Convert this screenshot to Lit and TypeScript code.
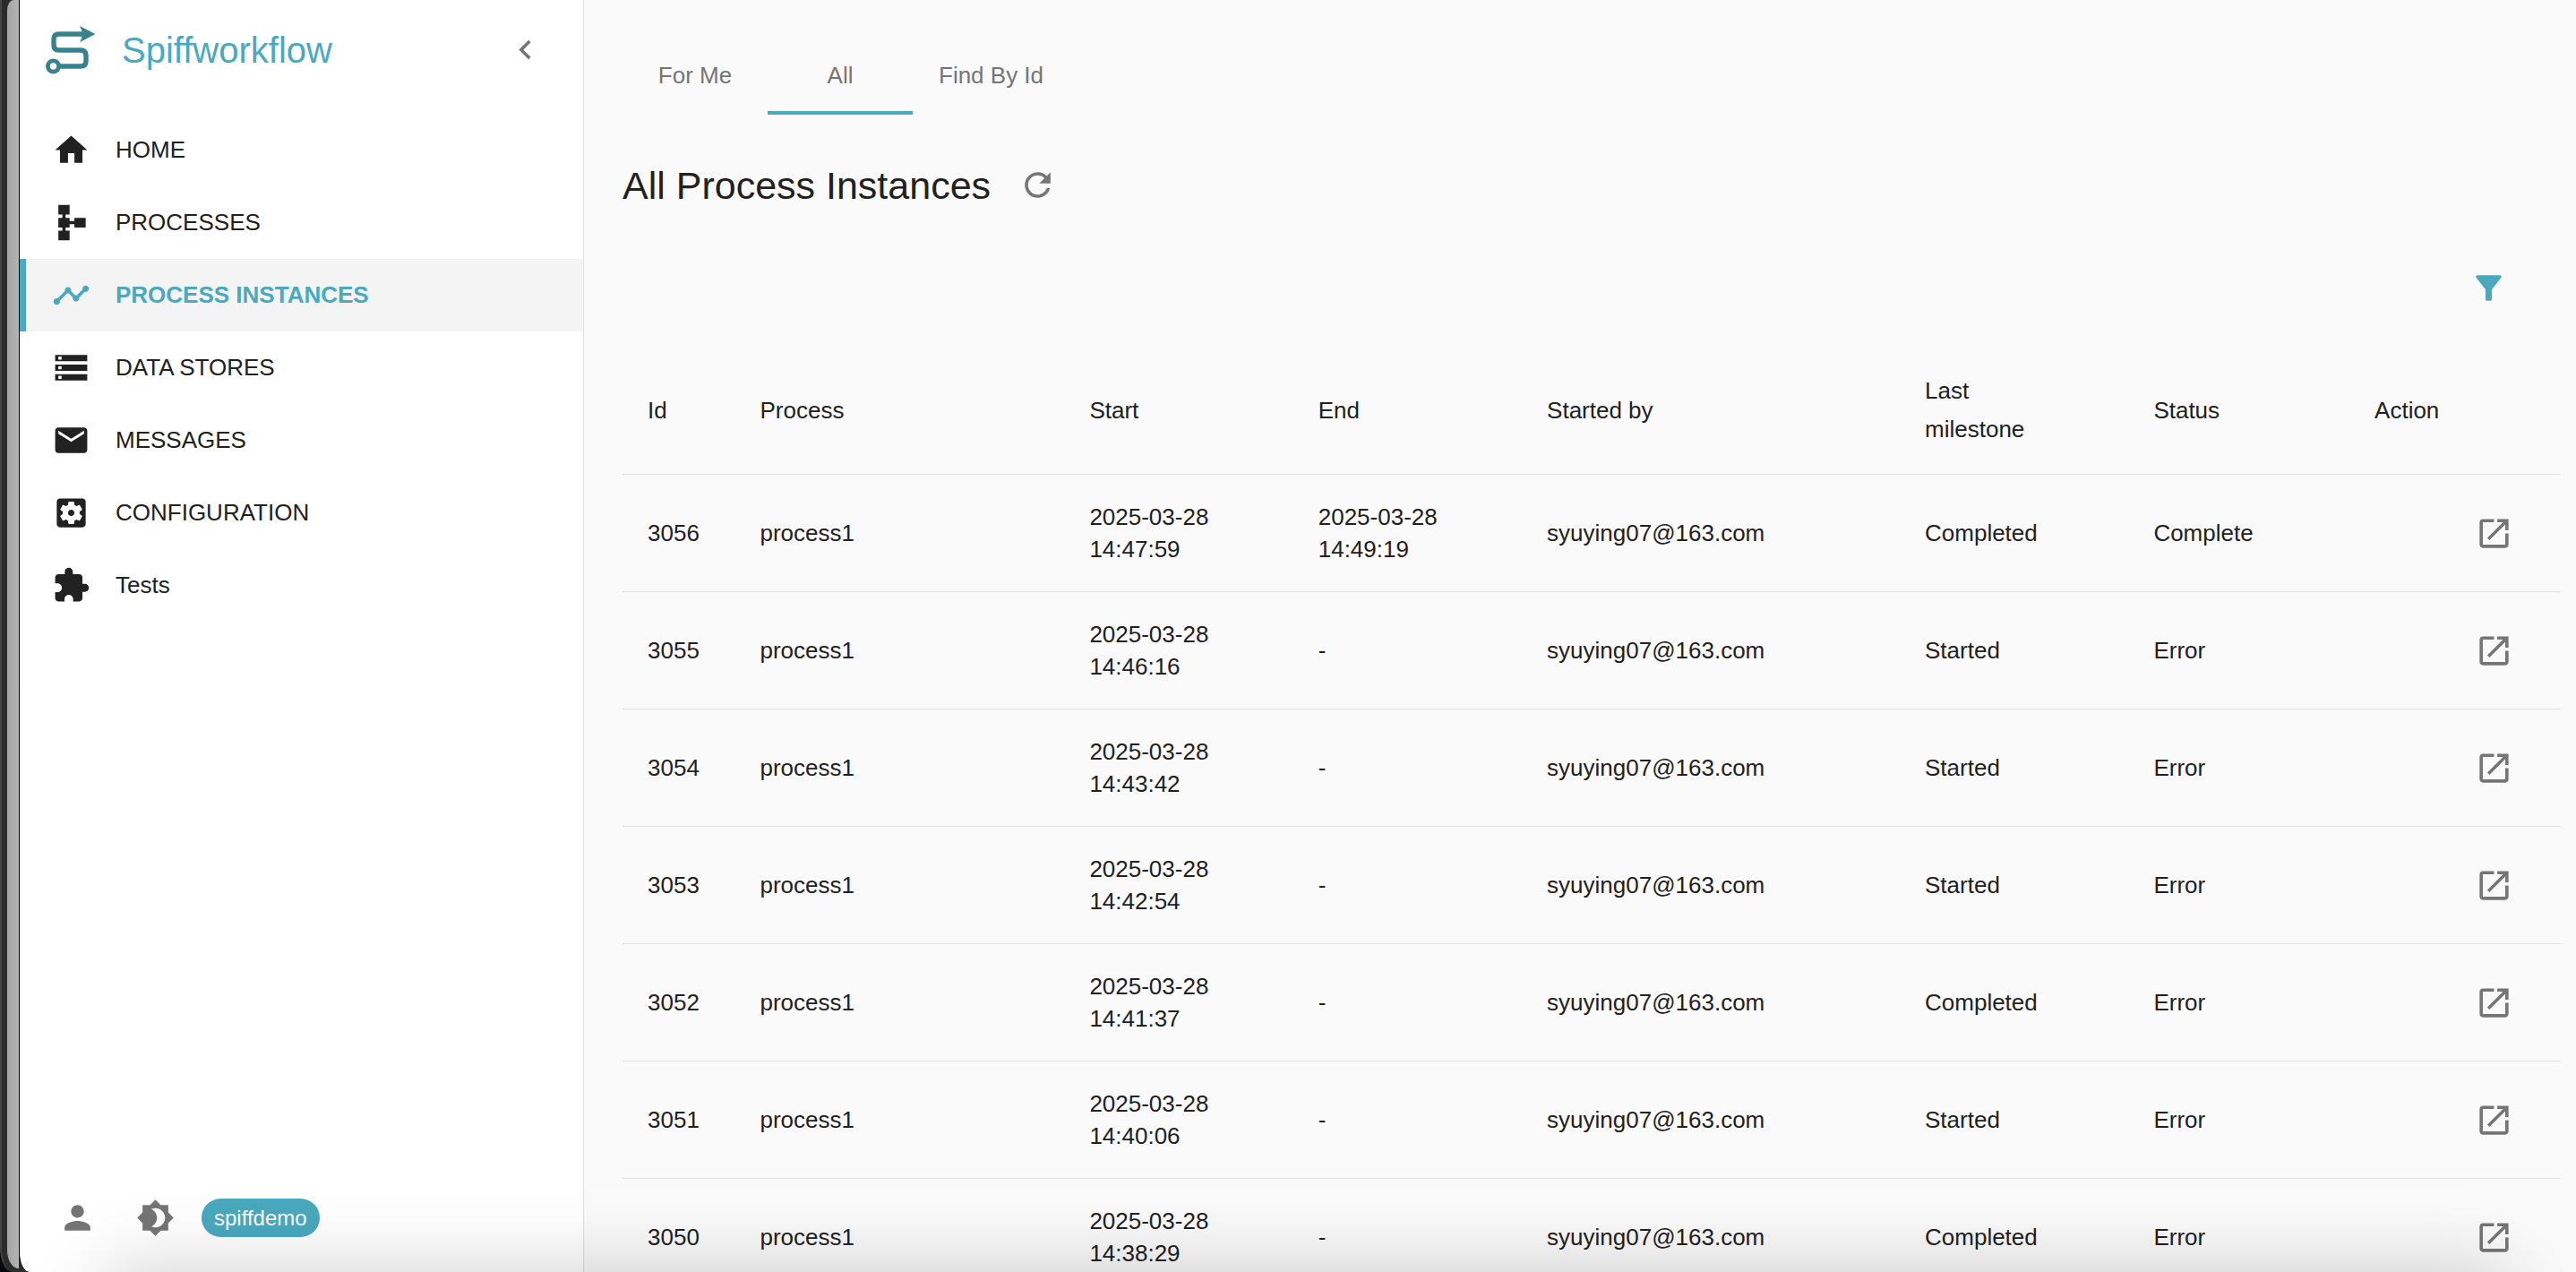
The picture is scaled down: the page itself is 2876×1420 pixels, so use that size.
import { LitElement, html, css, svg } from "lit";
import { customElement, property, state } from "lit/decorators.js";
import { classMap } from "lit/directives/class-map.js";

const ICONS: Record<string, string> = {
  home: "M10 20v-6h4v6h5v-8h3L12 3 2 12h3v8z",
  schema:
    "M14 9v2h-3V9H8.5V7H11V1H4v6h2.5v2H4v6h2.5v2H4v6h7v-6H8.5v-2H11v-2h3v2h7V9h-7z",
  timeline:
    "M23 8c0 1.1-.9 2-2 2-.18 0-.35-.02-.51-.07l-3.56 3.55c.05.16.07.34.07.52 0 1.1-.9 2-2 2s-2-.9-2-2c0-.18.02-.36.07-.52l-2.55-2.55c-.16.05-.34.07-.52.07s-.36-.02-.52-.07l-4.55 4.56c.05.16.07.33.07.51 0 1.1-.9 2-2 2s-2-.9-2-2 .9-2 2-2c.18 0 .35.02.51.07l4.56-4.55C8.02 9.36 8 9.18 8 9c0-1.1.9-2 2-2s2 .9 2 2c0 .18-.02.36-.07.52l2.55 2.55c.16-.05.34-.07.52-.07s.36.02.52.07l3.55-3.56C19.02 8.35 19 8.18 19 8c0-1.1.9-2 2-2s2 .9 2 2z",
  storage:
    "M2 20h20v-4H2v4zm2-3h2v2H4v-2zM2 4v4h20V4H2zm4 3H4V5h2v2zm-4 7h20v-4H2v4zm2-3h2v2H4v-2z",
  mail: "M20 4H4c-1.1 0-1.99.9-1.99 2L2 18c0 1.1.9 2 2 2h16c1.1 0 2-.9 2-2V6c0-1.1-.9-2-2-2zm0 4-8 5-8-5V6l8 5 8-5v2z",
  settings:
    "M12 10c-1.1 0-2 .9-2 2s.9 2 2 2 2-.9 2-2-.9-2-2-2zm7-7H5c-1.11 0-2 .9-2 2v14c0 1.1.89 2 2 2h14c1.11 0 2-.9 2-2V5c0-1.1-.89-2-2-2zm-1.75 9c0 .23-.02.46-.05.68l1.48 1.16c.13.11.17.3.08.45l-1.4 2.42c-.09.15-.27.21-.43.15l-1.74-.7c-.36.28-.76.51-1.18.69l-.26 1.85c-.03.17-.18.3-.35.3h-2.8c-.17 0-.32-.13-.35-.29l-.26-1.85c-.43-.18-.82-.41-1.18-.69l-1.74.7c-.16.06-.34 0-.43-.15l-1.4-2.42c-.09-.15-.05-.34.08-.45l1.48-1.16c-.03-.23-.05-.46-.05-.69 0-.23.02-.46.05-.68l-1.48-1.16c-.13-.11-.17-.3-.08-.45l1.4-2.42c.09-.15.27-.21.43-.15l1.74.7c.36-.28.76-.51 1.18-.69l.26-1.85c.03-.17.18-.3.35-.3h2.8c.17 0 .32.13.35.29l.26 1.85c.43.18.82.41 1.18.69l1.74-.7c.16-.06.34 0 .43.15l1.4 2.42c.09.15.05.34-.08.45l-1.48 1.16c.03.23.05.46.05.69z",
  extension:
    "M20.5 11H19V7c0-1.1-.9-2-2-2h-4V3.5C13 2.12 11.88 1 10.5 1S8 2.12 8 3.5V5H4c-1.1 0-1.99.9-1.99 2v3.8H3.5c1.49 0 2.7 1.21 2.7 2.7s-1.21 2.7-2.7 2.7H2V20c0 1.1.9 2 2 2h3.8v-1.5c0-1.49 1.21-2.7 2.7-2.7 1.49 0 2.7 1.21 2.7 2.7V22H17c1.1 0 2-.9 2-2v-4h1.5c1.38 0 2.5-1.12 2.5-2.5S21.88 11 20.5 11z",
  person:
    "M12 12c2.21 0 4-1.79 4-4s-1.79-4-4-4-4 1.79-4 4 1.79 4 4 4zm0 2c-2.67 0-8 1.34-8 4v2h16v-2c0-2.66-5.33-4-8-4z",
  brightness:
    "M20 8.69V4h-4.69L12 .69 8.69 4H4v4.69L.69 12 4 15.31V20h4.69L12 23.31 15.31 20H20v-4.69L23.31 12 20 8.69zM12 18c-.89 0-1.74-.2-2.5-.55C11.56 16.5 13 14.42 13 12s-1.44-4.5-3.5-5.45C10.26 6.2 11.11 6 12 6c3.31 0 6 2.69 6 6s-2.69 6-6 6z",
  chevron: "M15.41 7.41 14 6l-6 6 6 6 1.41-1.41L10.83 12z",
  refresh:
    "M17.65 6.35C16.2 4.9 14.21 4 12 4c-4.42 0-7.99 3.58-7.99 8s3.57 8 7.99 8c3.73 0 6.84-2.55 7.73-6h-2.08c-.82 2.33-3.04 4-5.65 4-3.31 0-6-2.69-6-6s2.69-6 6-6c1.66 0 3.14.69 4.22 1.78L13 11h7V4l-2.35 2.35z",
  filter:
    "M4.25 5.61C6.27 8.2 10 13 10 13v6c0 .55.45 1 1 1h2c.55 0 1-.45 1-1v-6s3.72-4.8 5.74-7.39c.51-.66.04-1.61-.79-1.61H5.04c-.83 0-1.3.95-.79 1.61z",
  open: "M19 19H5V5h7V3H5c-1.11 0-2 .9-2 2v14c0 1.1.89 2 2 2h14c1.1 0 2-.9 2-2v-7h-2v7zM14 3v2h3.59l-9.83 9.83 1.41 1.41L19 6.41V10h2V3h-7z",
};

@customElement("ui-icon")
class UiIcon extends LitElement {
  @property() name = "home";

  static styles = css`
    :host {
      display: block;
      flex: none;
      width: 43px;
      height: 43px;
    }
    .glyph {
      display: block;
      width: 100%;
      height: 100%;
      fill: currentColor;
    }
  `;

  render() {
    return html`<svg class="glyph" viewBox="0 0 24 24" aria-hidden="true">
      ${svg`<path d=${ICONS[this.name]}></path>`}
    </svg>`;
  }
}

const controls = css`
  .icon-button {
    display: flex;
    flex: none;
    padding: 14px;
    border: 0;
    border-radius: 50%;
    background: none;
    color: #757575;
    cursor: pointer;
  }
  .icon-button:hover {
    background: rgba(0, 0, 0, 0.04);
  }
`;

const NAV = [
  { icon: "home", label: "HOME" },
  { icon: "schema", label: "PROCESSES" },
  { icon: "timeline", label: "PROCESS INSTANCES" },
  { icon: "storage", label: "DATA STORES" },
  { icon: "mail", label: "MESSAGES" },
  { icon: "settings", label: "CONFIGURATION" },
  { icon: "extension", label: "Tests" },
];

@customElement("side-nav")
class SideNav extends LitElement {
  @property() current = "";

  static styles = [
    controls,
    css`
      :host {
        display: flex;
        flex-direction: column;
        box-sizing: border-box;
        flex: none;
        width: 631px;
        border-left: 1px solid #000;
        border-right: 1px solid #e0e0e0;
        border-bottom-left-radius: 12px 22px;
        background: #fff;
      }
      .brand {
        display: flex;
        align-items: center;
        height: 111px;
        padding: 0 29px 0 28px;
      }
      .logo {
        flex: none;
        width: 60px;
        height: 58px;
        margin-right: 26px;
      }
      .name {
        flex: 1;
        font-size: 40px;
        line-height: 48px;
        color: #4aa9be;
      }
      .menu {
        display: flex;
        flex-direction: column;
        margin-top: 16px;
      }
      .item {
        display: flex;
        align-items: center;
        gap: 28px;
        height: 81px;
        padding-left: 29px;
        border-left: 7px solid transparent;
        font-size: 26px;
        color: #212121;
        text-decoration: none;
      }
      .active {
        border-left-color: #4aa9be;
        background: #f4f4f4;
        color: #4aa9be;
        font-weight: bold;
      }
      .footer {
        display: flex;
        align-items: center;
        gap: 16px;
        margin-top: auto;
        padding: 0 29px 25px;
      }
      .chip {
        padding: 0 14px;
        border-radius: 22px;
        background: #4aa9be;
        color: #fff;
        font-size: 24px;
        line-height: 43px;
      }
    `,
  ];

  render() {
    return html`
      <div class="brand">
        <svg class="logo" viewBox="50 27 60 58" role="img" aria-label="Spiffworkflow logo">
          <g fill="none" stroke="#38828f" stroke-width="5.4">
            <path
              d="M66 74H90Q96 74 96 68V62Q96 56 90 56H66Q60 56 60 50V44Q60 38 66 38H93"
            ></path>
            <circle cx="59.5" cy="74" r="6.1" stroke-width="4.8"></circle>
          </g>
          <path d="M106.5 38 89 29Q94.5 38 89 47.2Z" fill="#38828f"></path>
        </svg>
        <span class="name">Spiffworkflow</span>
        <button class="icon-button" aria-label="Collapse navigation">
          <ui-icon name="chevron"></ui-icon>
        </button>
      </div>
      <nav class="menu">
        ${NAV.map(
          (item) => html`<a
            href="#"
            class=${classMap({ item: true, active: item.label === this.current })}
          >
            <ui-icon name=${item.icon}></ui-icon><span>${item.label}</span>
          </a>`
        )}
      </nav>
      <div class="footer">
        <button class="icon-button" aria-label="User"><ui-icon name="person"></ui-icon></button>
        <button class="icon-button" aria-label="Toggle theme">
          <ui-icon name="brightness"></ui-icon>
        </button>
        <span class="chip">spiffdemo</span>
      </div>
    `;
  }
}

interface Instance {
  id: number;
  start: string;
  end: string;
  milestone: string;
  status: string;
}

const INSTANCES: Instance[] = [
  { id: 3056, start: "14:47:59", end: "14:49:19", milestone: "Completed", status: "Complete" },
  { id: 3055, start: "14:46:16", end: "", milestone: "Started", status: "Error" },
  { id: 3054, start: "14:43:42", end: "", milestone: "Started", status: "Error" },
  { id: 3053, start: "14:42:54", end: "", milestone: "Started", status: "Error" },
  { id: 3052, start: "14:41:37", end: "", milestone: "Completed", status: "Error" },
  { id: 3051, start: "14:40:06", end: "", milestone: "Started", status: "Error" },
  { id: 3050, start: "14:38:29", end: "", milestone: "Completed", status: "Error" },
];

const DAY = "2025-03-28";

@customElement("instance-table")
class InstanceTable extends LitElement {
  static styles = [
    controls,
    css`
      :host {
        display: block;
      }
      .table {
        width: 100%;
        table-layout: fixed;
        border-collapse: separate;
        border-spacing: 0;
        font-size: 26px;
        color: #212121;
      }
      .head,
      .cell {
        padding: 29px 0 29px 28px;
        border-bottom: 1px solid #e0e0e0;
        text-align: left;
        vertical-align: middle;
        font-weight: normal;
        line-height: 36px;
      }
      .head {
        padding-top: 30px;
        padding-bottom: 28px;
        line-height: 43px;
      }
      .action {
        padding: 0 39px 0 0;
      }
      .action .icon-button {
        margin-left: auto;
      }
      .id {
        width: 5.8%;
      }
      .process {
        width: 17%;
      }
      .date,
      .milestone {
        width: 11.8%;
      }
      .user {
        width: 19.5%;
      }
      .status {
        width: 11.4%;
      }
    `,
  ];

  render() {
    return html`<table class="table">
      <colgroup>
        <col class="id" />
        <col class="process" />
        <col class="date" />
        <col class="date" />
        <col class="user" />
        <col class="milestone" />
        <col class="status" />
        <col />
      </colgroup>
      <thead>
        <tr>
          ${["Id", "Process", "Start", "End", "Started by"].map(
            (h) => html`<th class="head" scope="col">${h}</th>`
          )}
          <th class="head" scope="col">Last<br />milestone</th>
          <th class="head" scope="col">Status</th>
          <th class="head" scope="col">Action</th>
        </tr>
      </thead>
      <tbody>
        ${INSTANCES.map(
          (row) => html`<tr>
            <td class="cell">${row.id}</td>
            <td class="cell">process1</td>
            <td class="cell">${DAY}<br />${row.start}</td>
            <td class="cell">${row.end ? html`${DAY}<br />${row.end}` : "-"}</td>
            <td class="cell">syuying07@163.com</td>
            <td class="cell">${row.milestone}</td>
            <td class="cell">${row.status}</td>
            <td class="cell action">
              <button class="icon-button" aria-label="Open instance ${row.id}">
                <ui-icon name="open"></ui-icon>
              </button>
            </td>
          </tr>`
        )}
      </tbody>
    </table>`;
  }
}

@customElement("app-root")
class AppRoot extends LitElement {
  @state() private tab = "All";

  static styles = [
    controls,
    css`
      :host {
        display: block;
        position: relative;
        height: 100vh;
        overflow: hidden;
        background: #05080f;
        font-family: "Liberation Sans", Helvetica, Arial, sans-serif;
      }
      .shell {
        display: flex;
        box-sizing: border-box;
        height: 100%;
        border-left: 2px solid #444;
        border-bottom-left-radius: 14px 28px;
        background: #2b2b2b;
        overflow: hidden;
      }
      .edge {
        flex: none;
        width: 13px;
        margin: 0 0 4px 6px;
        border-radius: 8px 0 0 14px / 12px 0 0 22px;
        background: linear-gradient(90deg, #a4a4a4, #b4b4b4);
      }
      .main {
        flex: 1;
        min-width: 0;
        padding: 41px 17px 0 43px;
        background: #fafafa;
        overflow-y: auto;
        scrollbar-width: none;
      }
      .tabs {
        display: flex;
      }
      .tab {
        box-sizing: border-box;
        min-width: 162px;
        height: 87px;
        padding: 4px 29px 0;
        border: 0;
        border-bottom: 4px solid transparent;
        background: none;
        font: inherit;
        font-size: 26px;
        color: #757575;
        cursor: pointer;
      }
      .selected {
        border-bottom-color: #4aa9be;
      }
      .heading {
        display: flex;
        align-items: center;
        gap: 17px;
        margin-top: 43px;
      }
      .title {
        margin: 0;
        font-size: 43px;
        line-height: 58px;
        font-weight: normal;
        color: #212121;
      }
      .toolbar {
        display: flex;
        justify-content: flex-end;
        margin: 44px 0 28px;
        padding-right: 45px;
      }
      .filter {
        color: #4aa9be;
      }
      .shade {
        position: absolute;
        top: 100%;
        left: 120px;
        right: 76px;
        height: 100px;
        box-shadow: 0 0 90px rgba(0, 0, 0, 0.2);
        pointer-events: none;
      }
    `,
  ];

  render() {
    return html`
      <div class="shell">
        <div class="edge"></div>
        <side-nav current="PROCESS INSTANCES"></side-nav>
        <main class="main">
          <div class="tabs" role="tablist">
            ${["For Me", "All", "Find By Id"].map(
              (t) => html`<button
                role="tab"
                aria-selected=${t === this.tab}
                class=${classMap({ tab: true, selected: t === this.tab })}
                @click=${() => (this.tab = t)}
              >
                ${t}
              </button>`
            )}
          </div>
          <div class="heading">
            <h1 class="title">All Process Instances</h1>
            <button class="icon-button" aria-label="Refresh">
              <ui-icon name="refresh"></ui-icon>
            </button>
          </div>
          <div class="toolbar">
            <button class="icon-button filter" aria-label="Filter">
              <ui-icon name="filter"></ui-icon>
            </button>
          </div>
          <instance-table></instance-table>
        </main>
      </div>
      <div class="shade"></div>
    `;
  }
}
